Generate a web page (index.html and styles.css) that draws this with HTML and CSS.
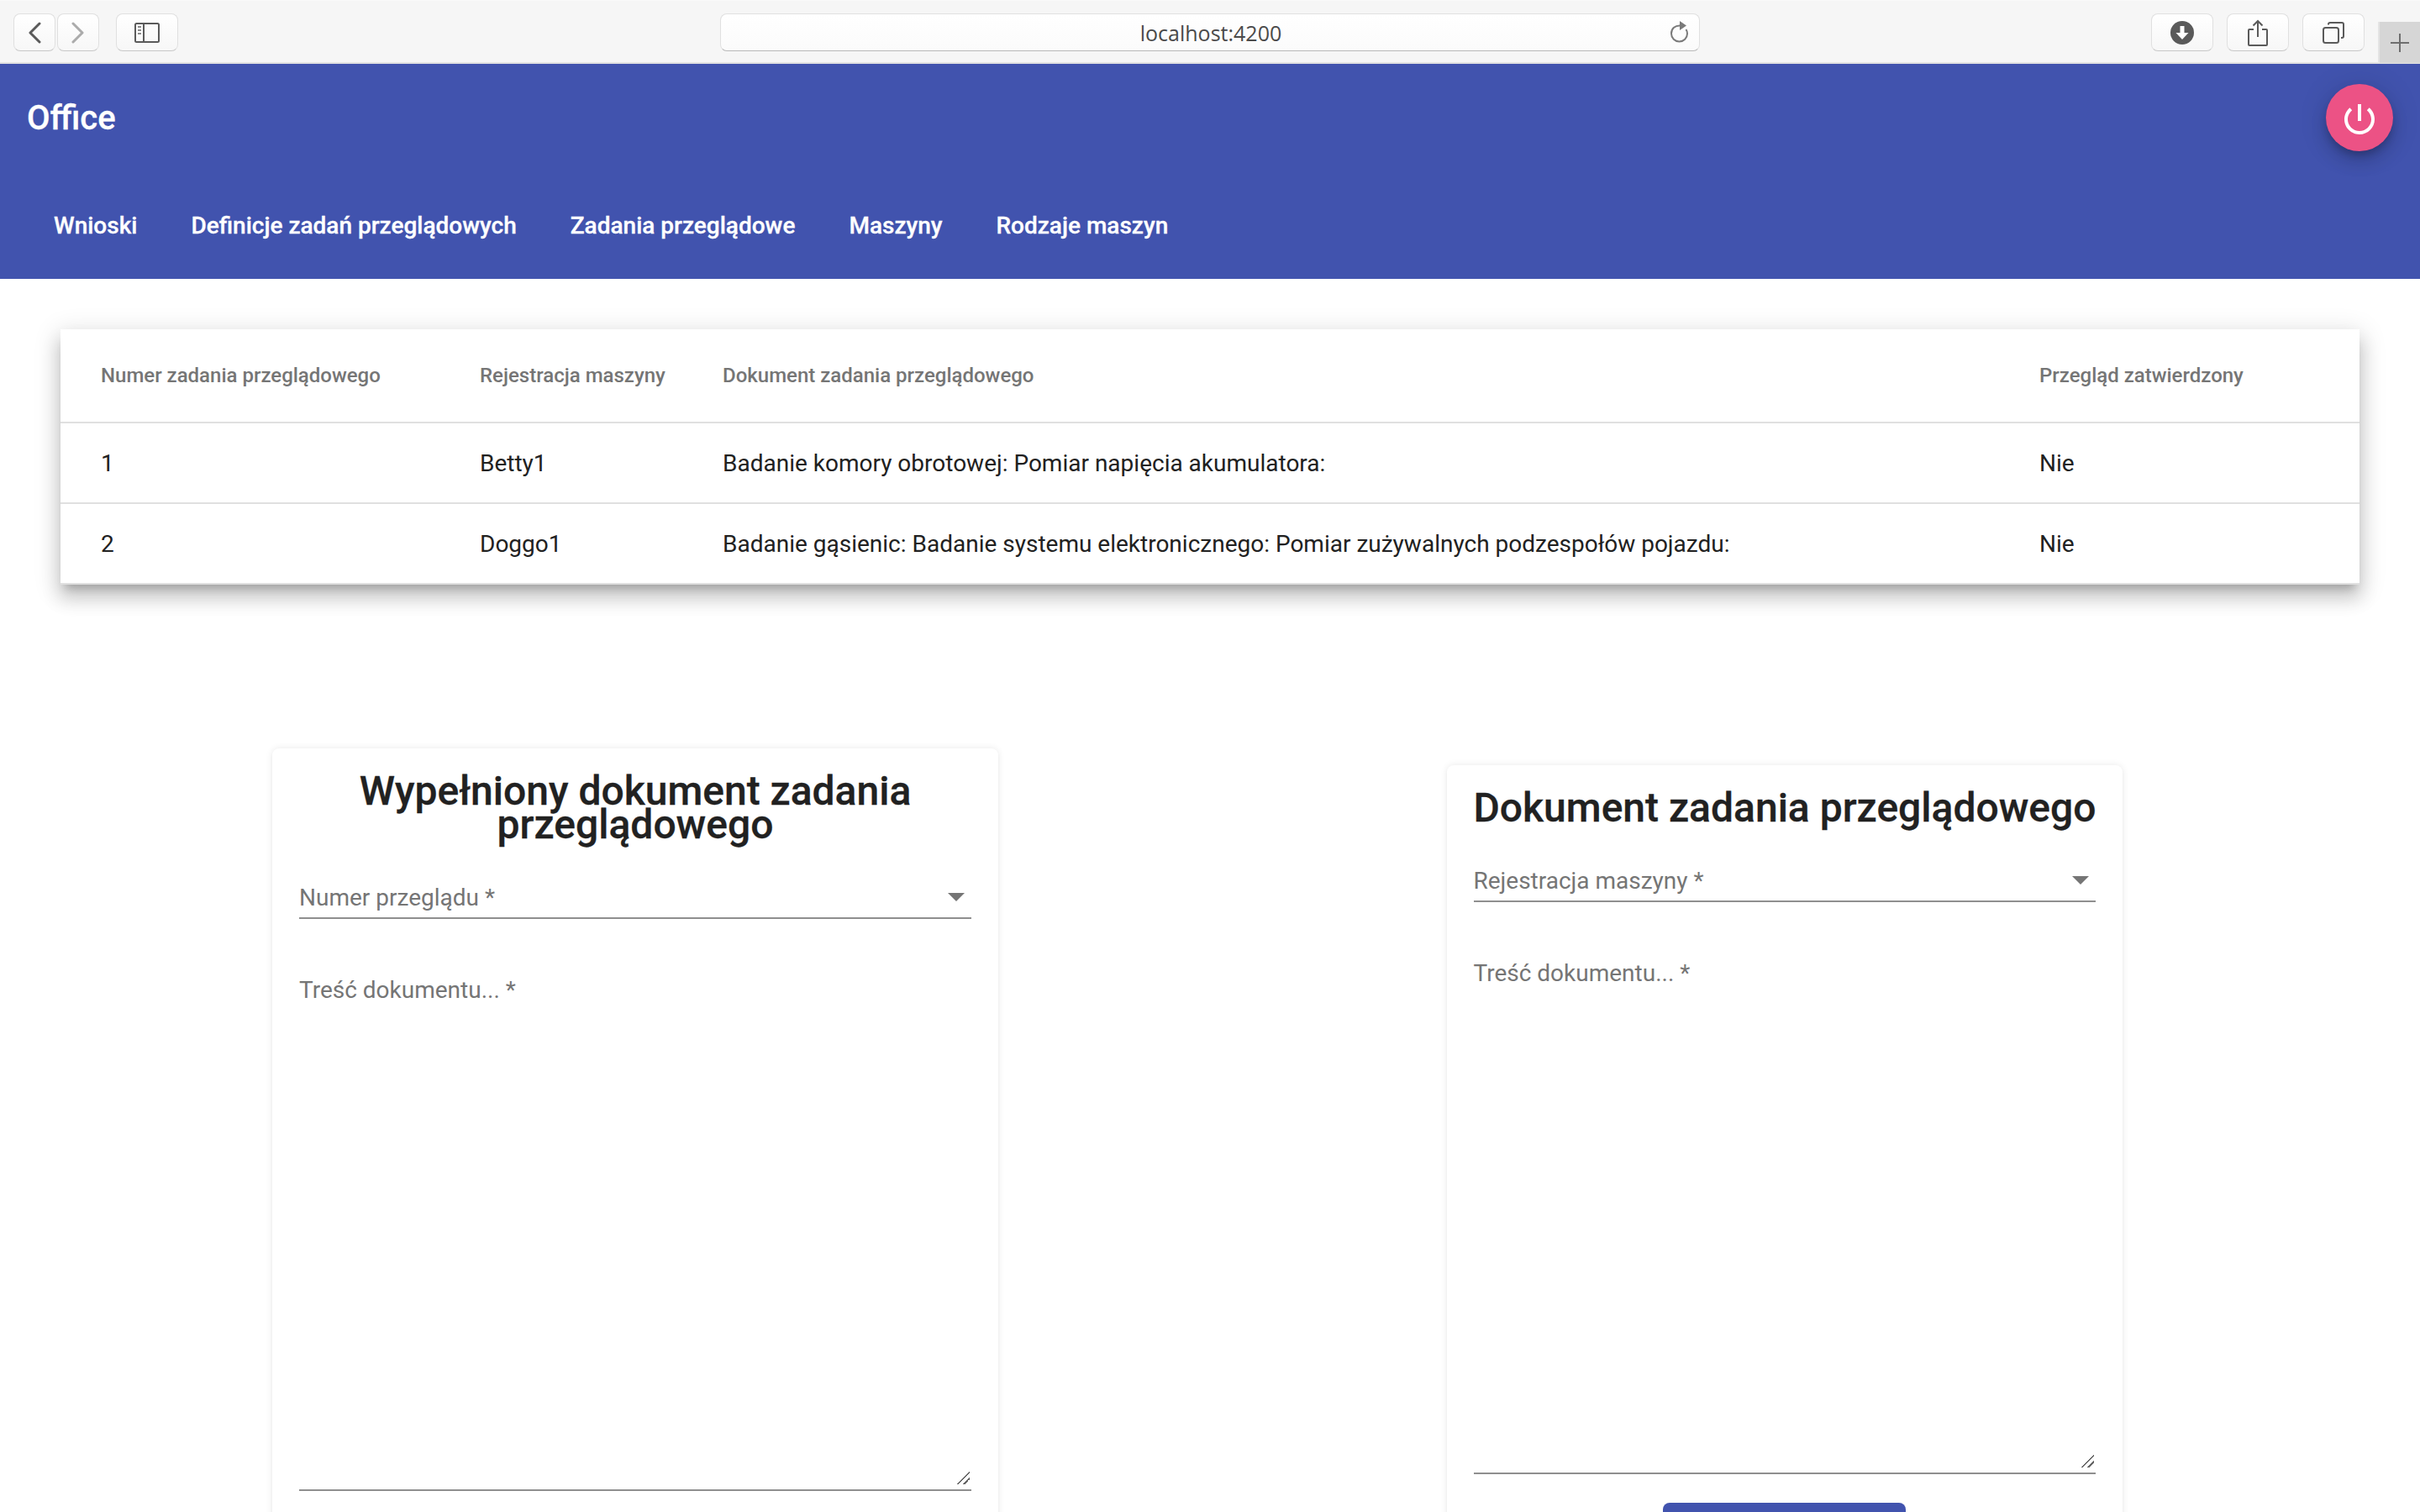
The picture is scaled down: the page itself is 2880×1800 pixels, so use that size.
FILE: index.html
```html
<!DOCTYPE html>
<html lang="en">
<head>
    <meta charset="UTF-8">
    <meta name="viewport" content="width=device-width, initial-scale=1.0">
    <title>Office</title>
    <link rel="stylesheet" href="styles.css">
</head>
<body>
    <div class="browser-bar">
        <div class="bar-left">
            <div class="nav-pair">
                <button class="bar-btn btn-nav">
                    <svg width="16" height="26" viewBox="0 0 16 26"><path d="M14 2 3 13l11 11" fill="none" stroke="#5a5a5a" stroke-width="3" stroke-linecap="round" stroke-linejoin="round"/></svg>
                </button>
                <button class="bar-btn btn-nav">
                    <svg width="16" height="26" viewBox="0 0 16 26"><path d="M2 2l11 11L2 24" fill="none" stroke="#ababab" stroke-width="3" stroke-linecap="round" stroke-linejoin="round"/></svg>
                </button>
            </div>
            <button class="bar-btn btn-wide">
                <svg width="30" height="24" viewBox="0 0 30 24"><rect x="1" y="1" width="28" height="22" rx="1.5" fill="none" stroke="#5a5a5a" stroke-width="2"/><path d="M11 1v22" stroke="#5a5a5a" stroke-width="2"/><path d="M4 5h4M4 9h4M4 13h4" stroke="#8a8a8a" stroke-width="2"/></svg>
            </button>
        </div>
        <div class="url-box">
            <span class="url-text">localhost:4200</span>
            <svg class="reload" width="24" height="28" viewBox="0 0 24 28"><path d="M14 6.500C7.500 6 3 10 3 16a9.500 9.500 0 0 0 19 0c0-2-.5-3.500-1.500-5" fill="none" stroke="#7a7a7a" stroke-width="2"/><path d="M13 1l8 5.500-8 5.500z" fill="#7a7a7a"/></svg>
        </div>
        <div class="bar-right">
            <button class="bar-btn btn-wide">
                <svg width="28" height="28" viewBox="0 0 28 28"><circle cx="14" cy="14" r="14" fill="#5a5a5a"/><path d="M11.500 6h5v8h5L14 22l-7.500-8h5z" fill="#fff"/></svg>
            </button>
            <button class="bar-btn btn-wide">
                <svg width="24" height="32" viewBox="0 0 24 32"><path d="M7 12H2a1 1 0 0 0-1 1v17a1 1 0 0 0 1 1h20a1 1 0 0 0 1-1V13a1 1 0 0 0-1-1h-5" fill="none" stroke="#5a5a5a" stroke-width="2"/><path d="M12 2v19M6.500 7.500 12 2l5.500 5.500" fill="none" stroke="#5a5a5a" stroke-width="2"/></svg>
            </button>
            <button class="bar-btn btn-wide">
                <svg width="26" height="26" viewBox="0 0 26 26"><rect x="1" y="7" width="18" height="18" rx="2.500" fill="none" stroke="#5a5a5a" stroke-width="2"/><path d="M7 3.500V3a2 2 0 0 1 2-2h14a2 2 0 0 1 2 2v14a2 2 0 0 1-2 2h-1" fill="none" stroke="#5a5a5a" stroke-width="2"/></svg>
            </button>
            <div class="new-tab">
                <svg width="24" height="24" viewBox="0 0 24 24"><path d="M12 1v22M1 12h22" stroke="#6e6e6e" stroke-width="2"/></svg>
            </div>
        </div>
    </div>

    <div class="header">
        <div class="title-row">
            <span class="app-title">Office</span>
            <button class="power-btn">
                <svg width="48" height="48" viewBox="0 0 24 24"><path fill="#fff" d="M13 3h-2v10h2V3zm4.830 2.170l-1.420 1.420C17.990 7.860 19 9.810 19 12c0 3.870-3.130 7-7 7s-7-3.130-7-7c0-2.190 1.010-4.140 2.580-5.420L6.170 5.170C4.230 6.820 3 9.260 3 12c0 4.970 4.030 9 9 9s9-4.030 9-9c0-2.740-1.230-5.180-3.170-6.830z"/></svg>
            </button>
        </div>
        <div class="nav-row">
            <a class="nav-link">Wnioski</a>
            <a class="nav-link">Definicje zadań przeglądowych</a>
            <a class="nav-link">Zadania przeglądowe</a>
            <a class="nav-link">Maszyny</a>
            <a class="nav-link">Rodzaje maszyn</a>
        </div>
    </div>

    <div class="main">
        <table class="task-table">
            <colgroup>
                <col class="col-num">
                <col class="col-reg">
                <col class="col-doc">
                <col class="col-ok">
            </colgroup>
            <thead>
                <tr>
                    <th>Numer zadania przeglądowego</th>
                    <th>Rejestracja maszyny</th>
                    <th>Dokument zadania przeglądowego</th>
                    <th>Przegląd zatwierdzony</th>
                </tr>
            </thead>
            <tbody>
                <tr>
                    <td>1</td>
                    <td>Betty1</td>
                    <td>Badanie komory obrotowej: Pomiar napięcia akumulatora:</td>
                    <td>Nie</td>
                </tr>
                <tr>
                    <td>2</td>
                    <td>Doggo1</td>
                    <td>Badanie gąsienic: Badanie systemu elektronicznego: Pomiar zużywalnych podzespołów pojazdu:</td>
                    <td>Nie</td>
                </tr>
            </tbody>
        </table>

        <div class="forms">
            <div class="card">
                <h1>Wypełniony dokument zadania przeglądowego</h1>
                <div class="select-field">
                    <span class="field-label">Numer przeglądu *</span>
                    <span class="arrow"></span>
                </div>
                <div class="text-field">
                    <label class="field-label float-label">Treść dokumentu... *</label>
                    <textarea class="doc-input"></textarea>
                </div>
                <button class="submit-btn"></button>
            </div>

            <div class="card">
                <h1>Dokument zadania przeglądowego</h1>
                <div class="select-field">
                    <span class="field-label">Rejestracja maszyny *</span>
                    <span class="arrow"></span>
                </div>
                <div class="text-field">
                    <label class="field-label float-label">Treść dokumentu... *</label>
                    <textarea class="doc-input"></textarea>
                </div>
                <button class="submit-btn"></button>
            </div>
        </div>
    </div>
</body>
</html>
```

FILE: styles.css
```css
* { margin: 0; padding: 0; box-sizing: border-box; }
html, body { height: 1800px; overflow: hidden; }
body { font-family: Roboto, "Noto Sans", sans-serif; background: #fff; color: #212121; }

/* browser chrome */
.browser-bar { display: grid; grid-template-columns: 857px 1166px 1fr; height: 76px; padding-top: 15px; background: #f6f6f6; border-top: 1px solid #fafafa; border-bottom: 2px solid #e2e2e2; }
.bar-left { display: flex; padding-left: 16px; gap: 20px; align-items: flex-start; }
.nav-pair { display: flex; gap: 2px; }
.bar-btn { display: flex; align-items: center; justify-content: center; height: 45px; background: linear-gradient(#fff, #f7f7f7); border: 1px solid #e0e0e0; border-bottom-color: #c8c8c8; border-radius: 8px; }
.btn-nav { width: 50px; }
.btn-wide { width: 74px; }
.url-box { position: relative; height: 45px; padding-left: 2px; display: flex; align-items: center; justify-content: center; background: linear-gradient(#fff, #fbfbfb); border: 1px solid #e0e0e0; border-bottom-color: #b8b8b8; border-radius: 8px; }
.url-text { font-family: "Open Sans", sans-serif; font-size: 25px; color: #4a4a4a; }
.reload { position: absolute; right: 12px; top: 7px; }
.bar-right { display: flex; justify-content: flex-end; gap: 16px; align-items: flex-start; }
.new-tab { display: flex; align-items: center; justify-content: center; width: 50px; height: 49px; margin-top: 10px; background: #d6d6d6; border-left: 2px solid #e4e4e4; }

/* app header */
.header { background: #4153ae; color: #fff; height: 256px; }
.title-row { display: flex; align-items: center; justify-content: space-between; height: 128px; padding: 0 32px; }
.app-title { font-size: 40px; font-weight: 500; -webkit-text-stroke: .3px #fff; }
.power-btn { display: flex; align-items: center; justify-content: center; width: 80px; height: 80px; padding-top: 4px; border: none; border-radius: 50%; background: #ec5285; box-shadow: 0 6px 10px -2px rgba(0,0,0,.2), 0 12px 20px 0 rgba(0,0,0,.14), 0 2px 36px 0 rgba(0,0,0,.12); }
.nav-row { display: flex; align-items: center; height: 128px; padding: 0 32px; }
.nav-link { padding: 0 32px; font-size: 28px; font-weight: 500; white-space: nowrap; -webkit-text-stroke: .3px #fff; }

/* table */
.main { padding: 60px 72px 0; }
.task-table { width: 100%; table-layout: fixed; border-collapse: collapse; background: #fff; box-shadow: 0 10px 10px -6px rgba(0,0,0,.2), 0 16px 20px 2px rgba(0,0,0,.14), 0 6px 28px 4px rgba(0,0,0,.12); }
.col-num { width: 499px; }
.col-reg { width: 289px; }
.col-doc { width: 1567px; }
.col-ok { width: 381px; }
.task-table th { height: 111px; font-size: 24px; font-weight: 500; color: #757575; text-align: left; border-bottom: 2px solid #e0e0e0; }
.task-table td { height: 96px; font-size: 28px; color: #212121; border-bottom: 2px solid #e0e0e0; }
.task-table th:first-child, .task-table td:first-child { padding-left: 48px; }

/* forms */
.forms { display: grid; grid-template-columns: 1fr 1fr; align-items: center; margin-top: 195px; }
.card { justify-self: center; max-width: 864px; padding: 31px 32px 32px; background: #fff; border-radius: 8px; box-shadow: 0 0 8px rgba(0,0,0,.09), 0 2px 3px rgba(0,0,0,.04); }
.card h1 { font-size: 48px; font-weight: 500; line-height: 40px; text-align: center; color: #212121; -webkit-text-stroke: .3px #212121; }
.select-field { display: flex; align-items: center; justify-content: space-between; margin-top: 42px; height: 50px; border-bottom: 2px solid #8f8f8f; }
.field-label { font-size: 28px; color: #757575; }
.arrow { width: 0; height: 0; margin-right: 8px; border-left: 10px solid transparent; border-right: 10px solid transparent; border-top: 10px solid #757575; }
.text-field { position: relative; margin-top: 40px; height: 641px; border-bottom: 2px solid #8f8f8f; }
.float-label { position: absolute; left: 0; top: 28px; }
.doc-input { display: block; width: calc(100% - 2px); height: 633px; padding-top: 28px; border: none; outline: none; background: transparent; font-family: inherit; font-size: 28px; resize: vertical; }
.doc-input::-webkit-resizer { background: linear-gradient(135deg, transparent 48%, #666 48%, #666 56%, transparent 56%, transparent 72%, #666 72%, #666 80%, transparent 80%); }
.submit-btn { display: block; width: 289px; height: 72px; margin: 34px auto 0; border: none; border-radius: 8px; background: #4153ae; }
```
